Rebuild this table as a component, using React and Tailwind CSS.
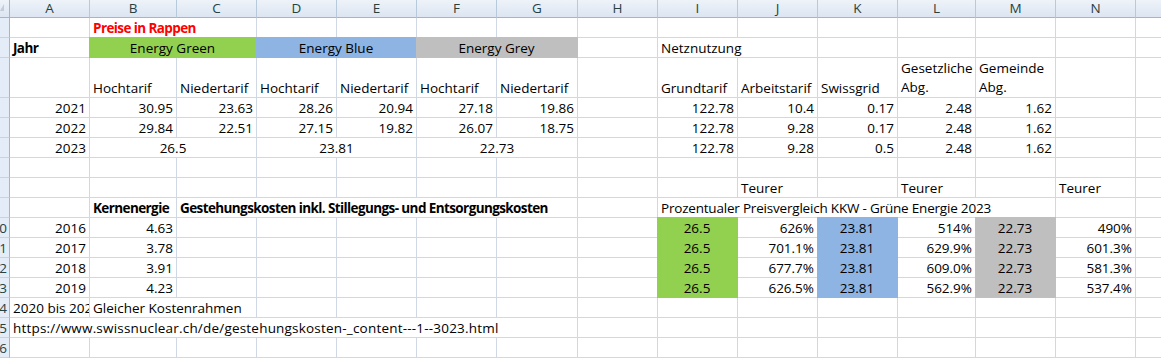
import React from 'react';

const COLS = ['A', 'B', 'C', 'D', 'E', 'F', 'G', 'H', 'I', 'J', 'K', 'L', 'M', 'N', 'O'];

const SPAN = { 1: 'col-span-1', 2: 'col-span-2', 5: 'col-span-5', 7: 'col-span-7' };
const JUST = { l: 'justify-start', r: 'justify-end', c: 'justify-center' };
const FILL = {
  green: 'bg-[#92d050] border-[#92d050] -ml-px -mt-px relative z-[1]',
  blue: 'bg-[#8db4e2] border-[#8db4e2] -ml-px -mt-px relative z-[1]',
  grey: 'bg-[#bfbfbf] border-[#bfbfbf] -ml-px -mt-px relative z-[1]',
};

const r = (t) => ({ t, a: 'r' });
const g = (t) => ({ t, a: 'c', f: 'green' });
const bl = (t) => ({ t, a: 'c', f: 'blue' });
const gr = (t) => ({ t, a: 'c', f: 'grey' });

const ROWS = [
  { n: 1, cells: { B: { t: 'Preise in Rappen', s: 2, b: true, red: true } } },
  {
    n: 2,
    cells: {
      A: { t: 'Jahr', b: true },
      B: { t: 'Energy Green', s: 2, a: 'c', f: 'green' },
      D: { t: 'Energy Blue', s: 2, a: 'c', f: 'blue' },
      F: { t: 'Energy Grey', s: 2, a: 'c', f: 'grey' },
      I: { t: 'Netznutzung', s: 2 },
    },
  },
  {
    n: 3,
    cells: {
      B: { t: 'Hochtarif' },
      C: { t: 'Niedertarif' },
      D: { t: 'Hochtarif' },
      E: { t: 'Niedertarif' },
      F: { t: 'Hochtarif' },
      G: { t: 'Niedertarif' },
      I: { t: 'Grundtarif' },
      J: { t: 'Arbeitstarif' },
      K: { t: 'Swissgrid' },
      L: { t: 'Gesetzliche\nAbg.', w: true },
      M: { t: 'Gemeinde\nAbg.', w: true },
    },
  },
  {
    n: 4,
    cells: {
      A: r('2021'), B: r('30.95'), C: r('23.63'), D: r('28.26'), E: r('20.94'), F: r('27.18'), G: r('19.86'),
      I: r('122.78'), J: r('10.4'), K: r('0.17'), L: r('2.48'), M: r('1.62'),
    },
  },
  {
    n: 5,
    cells: {
      A: r('2022'), B: r('29.84'), C: r('22.51'), D: r('27.15'), E: r('19.82'), F: r('26.07'), G: r('18.75'),
      I: r('122.78'), J: r('9.28'), K: r('0.17'), L: r('2.48'), M: r('1.62'),
    },
  },
  {
    n: 6,
    cells: {
      A: r('2023'),
      B: { t: '26.5', s: 2, a: 'c' },
      D: { t: '23.81', s: 2, a: 'c' },
      F: { t: '22.73', s: 2, a: 'c' },
      I: r('122.78'), J: r('9.28'), K: r('0.5'), L: r('2.48'), M: r('1.62'),
    },
  },
  { n: 7, cells: {} },
  { n: 8, cells: { J: { t: 'Teurer' }, L: { t: 'Teurer' }, N: { t: 'Teurer' } } },
  {
    n: 9,
    cells: {
      B: { t: 'Kernenergie', b: true },
      C: { t: 'Gestehungskosten inkl. Stillegungs- und Entsorgungskosten', s: 5, b: true },
      I: { t: 'Prozentualer Preisvergleich KKW - Grüne Energie 2023', s: 5, tight: true },
    },
  },
  { n: 10, cells: { A: r('2016'), B: r('4.63'), I: g('26.5'), J: r('626%'), K: bl('23.81'), L: r('514%'), M: gr('22.73'), N: r('490%') } },
  { n: 11, cells: { A: r('2017'), B: r('3.78'), I: g('26.5'), J: r('701.1%'), K: bl('23.81'), L: r('629.9%'), M: gr('22.73'), N: r('601.3%') } },
  { n: 12, cells: { A: r('2018'), B: r('3.91'), I: g('26.5'), J: r('677.7%'), K: bl('23.81'), L: r('609.0%'), M: gr('22.73'), N: r('581.3%') } },
  { n: 13, cells: { A: r('2019'), B: r('4.23'), I: g('26.5'), J: r('626.5%'), K: bl('23.81'), L: r('562.9%'), M: gr('22.73'), N: r('537.4%') } },
  { n: 14, cells: { A: { t: '2020 bis 2022' }, B: { t: 'Gleicher Kostenrahmen', s: 2 } } },
  { n: 15, cells: { A: { t: 'https://www.swissnuclear.ch/de/gestehungskosten-_content---1--3023.html', s: 7, wide: true } } },
  { n: 16, cells: {} },
];

function Cell({ spec, col }) {
  const s = spec || {};
  const isLast = col === 'O';
  const cls = [
    'flex items-end min-w-0 overflow-hidden border-b px-[3px]',
    isLast ? '' : 'border-r',
    s.w ? 'whitespace-pre leading-[19px]' : 'whitespace-nowrap leading-[17px]',
    SPAN[s.s || 1],
    JUST[s.a || 'l'],
    s.f ? FILL[s.f] : 'border-[#d0d7e5]',
    s.b ? 'font-bold tracking-[-0.6px]' : '',
    s.tight ? 'tracking-[-0.2px]' : '',
    s.wide ? 'tracking-[0.2px]' : '',
    s.red ? 'text-[#ff0000]' : 'text-black',
  ].join(' ');
  return <div className={cls}>{s.t || ''}</div>;
}

function RowHeader({ n }) {
  return (
    <div className="flex items-end justify-end overflow-hidden whitespace-nowrap bg-[#e4ecf7] border-r border-b border-r-[#9eb6ce] border-b-[#c5d3e3] pr-[2px] leading-[17px] text-[#27413e]">
      {n >= 10 ? String(n) : ''}
    </div>
  );
}

export default function App() {
  const items = [];
  items.push(
    <div key="corner" className="relative bg-linear-to-b from-[#eef3f9] to-[#dce5f1] border-r border-b border-[#9eb6ce]">
      <svg width="9" height="17" className="block">
        <polygon points="0,11 4,4 4,11" fill="#c3ccd8" />
      </svg>
    </div>
  );
  COLS.forEach((c) => {
    items.push(
      <div
        key={'h' + c}
        className={
          'flex items-center justify-center bg-linear-to-b from-[#eef3f9] to-[#dce5f1] border-b border-b-[#9eb6ce] text-[#27413e] leading-[17px] ' +
          (c === 'O' ? '' : 'border-r border-r-[#b9c9dc]')
        }
      >
        {c === 'O' ? '' : c}
      </div>
    );
  });
  ROWS.forEach((row) => {
    items.push(<RowHeader key={'rh' + row.n} n={row.n} />);
    let i = 0;
    while (i < COLS.length) {
      const col = COLS[i];
      const spec = row.cells[col];
      items.push(<Cell key={row.n + col} spec={spec} col={col} />);
      i += spec && spec.s ? spec.s : 1;
    }
  });

  return (
    <div className="w-[1161px] h-[358px] overflow-hidden bg-white font-['Open_Sans',sans-serif] text-[13.5px]">
      <div className="grid w-full h-full grid-cols-[10px_80px_87px_80px_80px_80px_80px_81px_80px_80px_80px_80px_78px_80px_80px_1fr] grid-rows-[18px_20px_20px_40px_repeat(13,20px)]">
        {items}
      </div>
    </div>
  );
}
